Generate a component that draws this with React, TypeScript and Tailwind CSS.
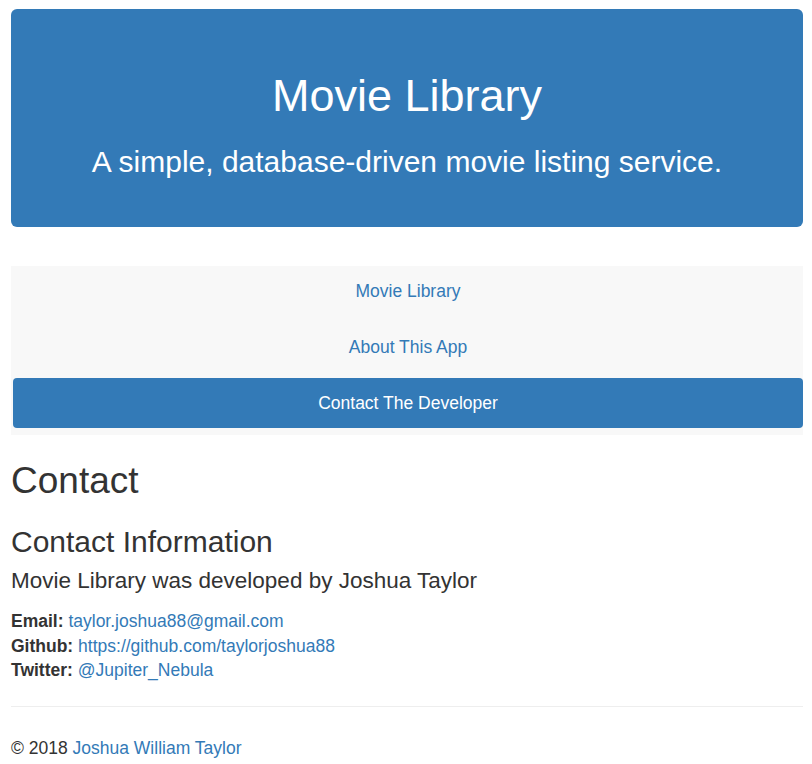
export default function App() {
  const font = { fontFamily: '"Liberation Sans", Arial, sans-serif' };
  return (
    <div className="min-h-screen bg-white pl-[11px] pr-[9px] pt-[9px] text-[17.5px] leading-[24.5px] text-[#333]" style={font}>
      {/* header */}
      <div className="flex h-[218px] flex-col items-center rounded-[6px] bg-[#337ab7] pt-[62px] text-white">
        <h1 className="text-[45px] leading-[1.1]">Movie Library</h1>
        <p className="mt-[24px] text-[30px] leading-[1.1]">A simple, database-driven movie listing service.</p>
      </div>

      {/* nav */}
      <nav className="mt-[39px] bg-[#f8f8f8] pb-[7px] pl-[2px]">
        <ul className="flex flex-col gap-[6px]">
          <li>
            <a href="#" className="flex h-[50px] items-center justify-center rounded-[4px] text-[#337ab7]">Movie Library</a>
          </li>
          <li>
            <a href="#" className="flex h-[50px] items-center justify-center rounded-[4px] text-[#337ab7]">About This App</a>
          </li>
          <li>
            <a href="#" className="flex h-[50px] items-center justify-center rounded-[4px] bg-[#337ab7] text-white">Contact The Developer</a>
          </li>
        </ul>
      </nav>

      {/* content */}
      <main>
        <h1 className="mt-[26px] text-[37px] leading-[1.1]">Contact</h1>
        <h2 className="mt-[23px] text-[30px] leading-[1.1]">Contact Information</h2>
        <h4 className="mt-[11px] text-[22.5px] leading-[1.1]">Movie Library was developed by Joshua Taylor</h4>
        <div className="mt-[16px]">
          <div>
            <strong>Email:</strong> <a href="#" className="text-[#337ab7]">taylor.joshua88@gmail.com</a>
          </div>
          <div>
            <strong>Github:</strong> <a href="#" className="text-[#337ab7]">https://github.com/taylorjoshua88</a>
          </div>
          <div>
            <strong>Twitter:</strong> <a href="#" className="text-[#337ab7]">@Jupiter_Nebula</a>
          </div>
        </div>
      </main>

      <hr className="mt-[23px] border-t border-[#eee]" />
      <footer className="pt-[29px]">
        © 2018 <a href="#" className="text-[#337ab7]">Joshua William Taylor</a>
      </footer>
    </div>
  );
}
